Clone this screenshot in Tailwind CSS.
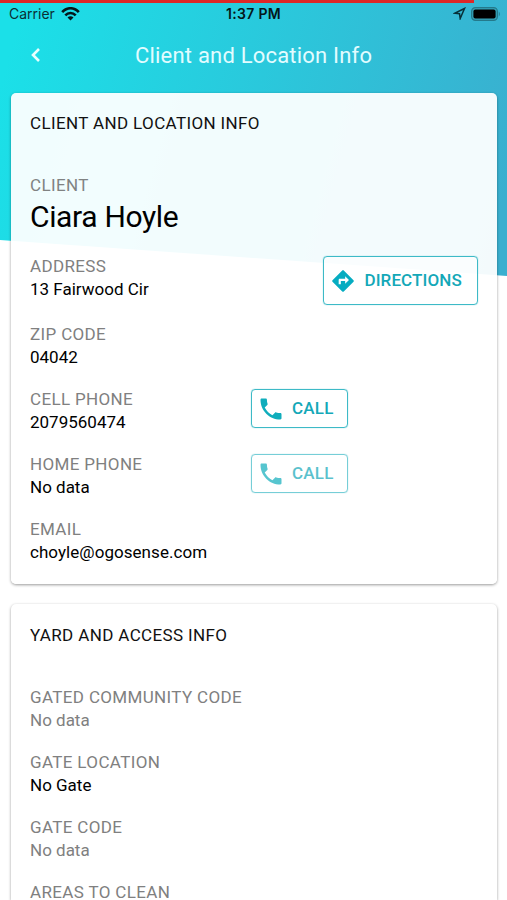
<!DOCTYPE html>
<html lang="en">
<head>
<meta charset="utf-8">
<title>Client and Location Info</title>
<script src="https://cdn.jsdelivr.net/npm/@tailwindcss/browser@4"></script>
</head>
<body class="relative h-[900px] w-[507px] overflow-hidden bg-white font-[Roboto,sans-serif] text-[17px] leading-[23px] text-black">
<div class="absolute inset-x-0 top-0 -z-10 h-[276px] bg-linear-[105deg,#1be0e8_4%,#3aafcf_96%] [clip-path:polygon(0_0,100%_0,100%_100%,0_240px)]"></div>
<div class="absolute left-0 top-0 h-[3px] w-[474px] bg-[#dd2727]"></div>

<header class="h-[93px]">
  <div class="grid h-[27px] grid-cols-3 items-center px-[9px] font-[Inter,sans-serif] text-[14px] text-[#0b2f35]">
    <div class="flex items-center gap-[6px]"><span>Carrier</span>
      <svg class="h-[14px] w-[19px]" viewBox="0 0 19 14" fill="none" stroke="#04171a" stroke-width="2.600"><path d="M1.200 5.200C6-.1 13-.1 17.800 5.200M4.300 8.400c3-3.200 7.400-3.200 10.400 0"/><path d="M6.500 10.500c1.700-1.700 4.300-1.700 6 0l-3 3z" fill="#04171a" stroke="none"/></svg>
    </div>
    <span class="text-center text-[14px] font-semibold tracking-[0.300px] text-[#04171a]">1:37 PM</span>
    <div class="-mr-[3px] flex items-center justify-end gap-[5px]">
      <svg class="h-[13px] w-[13px]" viewBox="0 0 13 13" fill="none" stroke="#073038" stroke-width="1.500" stroke-linejoin="miter"><path d="M11.500 1.500 2 6.200l4.500.5.700 4.800z"/></svg>
      <svg class="h-[14px] w-[30px]" viewBox="0 0 30 14"><rect x=".6" y=".6" width="25.800" height="12.800" rx="3.800" fill="#35a3b8" stroke="#24798b" stroke-width="1.200"/><rect x="2.400" y="2.400" width="22.200" height="9.200" rx="2" fill="#000"/><path d="M27.800 4.500q2 2.500 0 5z" fill="#24798b"/></svg>
    </div>
  </div>
  <div class="flex h-[56px] items-center">
    <svg class="ml-[29px] h-[16px] w-[12px]" viewBox="0 0 12 16" fill="none" stroke="#e8ffff" stroke-width="2.600"><path d="M10 2 4 8l6 6"/></svg>
    <h1 class="ml-[94px] text-[22px] tracking-[0.200px] text-[#e2fcff]">Client and Location Info</h1>
  </div>
</header>

<main class="flex flex-col gap-[20px] px-[10.500px]">
  <section class="h-[491px] rounded-[5px] bg-white/94 px-[19.500px] pt-[19px] shadow-[0_1px_3px_rgba(0,0,0,0.4)]">
    <h2 class="tracking-[0.370px] text-[#111]">CLIENT AND LOCATION INFO</h2>
    <div class="mt-[39px]">
      <p class="tracking-[0.350px] text-[#808282]">CLIENT</p>
      <p class="mt-px text-[30px] leading-[38px] tracking-[-0.350px]">Ciara Hoyle</p>
    </div>
    <div class="mt-[19px] flex h-[47px] justify-between">
      <div><p class="tracking-[0.350px] text-[#808080]">ADDRESS</p><p>13 Fairwood Cir</p></div>
      <button class="-mr-[0.500px] mt-px flex h-[49px] w-[155px] shrink-0 items-center rounded-[4px] border border-[#3dbac7] bg-white/60 pl-[6px] font-medium text-[#14a8b8] shadow-[0_0_1px_#4bbfcb]">
        <svg class="h-[26px] w-[26px]" viewBox="0 0 24 24" fill="#06acc1"><path d="M21.710 11.290l-9-9a.996.996 0 0 0-1.410 0l-9 9a.996.996 0 0 0 0 1.410l9 9c.390.390 1.020.390 1.410 0l9-9a.996.996 0 0 0 0-1.410zM14 14.500V12h-4v3H8v-4c0-.550.450-1 1-1h5V7.500l3.500 3.500-3.500 3.500z"/></svg>
        <span class="-mt-px ml-[9px] tracking-[0.100px]">DIRECTIONS</span>
      </button>
    </div>
    <div class="mt-[21px]"><p class="tracking-[0.350px] text-[#808080]">ZIP CODE</p><p>04042</p></div>
    <div class="mt-[19px] flex h-[46px]">
      <div class="w-[221px]"><p class="tracking-[0.350px] text-[#808080]">CELL PHONE</p><p>2079560474</p></div>
      <button class="mt-[1px] flex h-[39px] w-[97px] items-center rounded-[4px] border border-[#3dbac7] pl-[5px] font-medium text-[#14a8b8] shadow-[0_0_1px_#4bbfcb]">
        <svg class="h-[28px] w-[28px]" viewBox="0 0 24 24" fill="#10adbc"><path d="M6.620 10.790c1.440 2.830 3.760 5.140 6.590 6.590l2.200-2.200c.270-.270.670-.360 1.020-.240 1.120.370 2.330.570 3.570.570.550 0 1 .450 1 1V20c0 .550-.450 1-1 1-9.390 0-17-7.610-17-17 0-.550.450-1 1-1h3.500c.550 0 1 .450 1 1 0 1.250.200 2.450.570 3.570.110.350.030.740-.250 1.020l-2.200 2.200z"/></svg>
        <span class="-mt-px ml-[7px] tracking-[0.200px]">CALL</span>
      </button>
    </div>
    <div class="mt-[19px] flex h-[46px]">
      <div class="w-[221px]"><p class="tracking-[0.350px] text-[#808080]">HOME PHONE</p><p>No data</p></div>
      <button class="mt-[1px] flex h-[39px] w-[97px] items-center rounded-[4px] border border-[#3dbac7] pl-[5px] font-medium text-[#14a8b8] opacity-70 shadow-[0_0_1px_#4bbfcb]">
        <svg class="h-[28px] w-[28px]" viewBox="0 0 24 24" fill="#10adbc"><path d="M6.620 10.790c1.440 2.830 3.760 5.140 6.590 6.590l2.200-2.200c.270-.270.670-.360 1.020-.240 1.120.370 2.330.570 3.570.570.550 0 1 .450 1 1V20c0 .550-.450 1-1 1-9.390 0-17-7.610-17-17 0-.550.450-1 1-1h3.500c.550 0 1 .450 1 1 0 1.250.200 2.450.570 3.570.110.350.030.740-.250 1.020l-2.200 2.200z"/></svg>
        <span class="-mt-px ml-[7px] tracking-[0.200px]">CALL</span>
      </button>
    </div>
    <div class="mt-[19px]"><p class="tracking-[0.350px] text-[#808080]">EMAIL</p><p class="tracking-[0.050px]">choyle@ogosense.com</p></div>
  </section>

  <section class="h-[296px] shrink-0 rounded-t-[5px] bg-white px-[19.500px] pt-[20px] shadow-[0_1px_3px_rgba(0,0,0,0.4)]">
    <h2 class="tracking-[0.370px] text-[#111]">YARD AND ACCESS INFO</h2>
    <div class="mt-[39px] flex flex-col gap-[19px] text-[#808080]">
      <div><p class="tracking-[0.350px]">GATED COMMUNITY CODE</p><p>No data</p></div>
      <div><p class="tracking-[0.350px]">GATE LOCATION</p><p class="text-black">No Gate</p></div>
      <div><p class="tracking-[0.350px]">GATE CODE</p><p>No data</p></div>
      <p class="h-[19px] tracking-[0.350px]">AREAS TO CLEAN</p>
    </div>
  </section>
</main>
</body>
</html>
